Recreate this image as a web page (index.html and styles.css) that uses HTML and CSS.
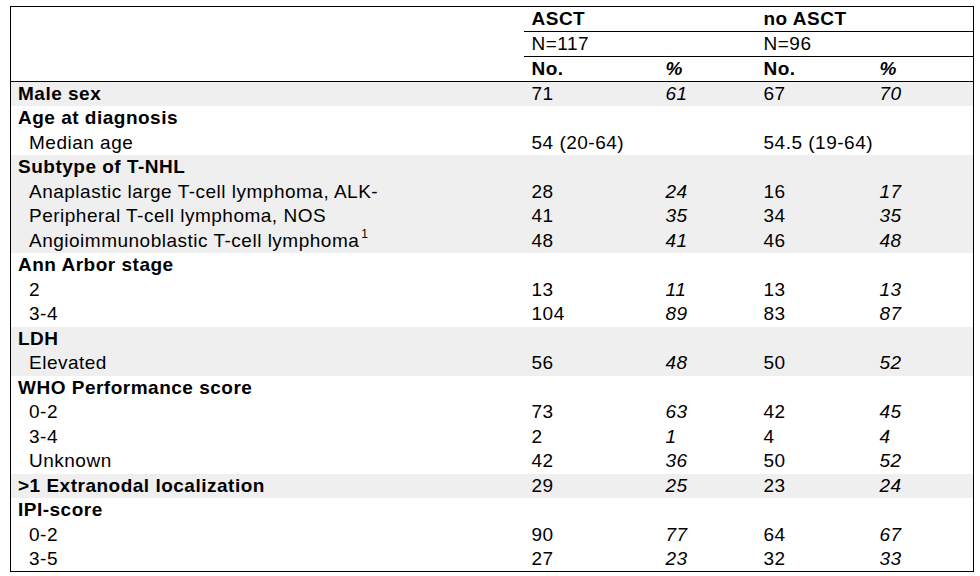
FILE: index.html
```html
<!DOCTYPE html>
<html>
<head>
<meta charset="utf-8">
<link rel="stylesheet" href="styles.css">
</head>
<body>
<table class="tbl">
  <colgroup>
    <col class="c-label">
    <col class="c-no">
    <col class="c-pct">
    <col class="c-no2">
    <col class="c-pct2">
  </colgroup>
  <thead>
    <tr class="h1">
      <th rowspan="3" class="blank"></th>
      <th colspan="2" class="grp">ASCT</th>
      <th colspan="2" class="grp">no ASCT</th>
    </tr>
    <tr class="h2">
      <td colspan="2" class="grp">N=117</td>
      <td colspan="2" class="grp">N=96</td>
    </tr>
    <tr class="h3">
      <th>No.</th>
      <th class="pct">%</th>
      <th>No.</th>
      <th class="pct">%</th>
    </tr>
  </thead>
  <tbody>
    <tr class="shade"><th class="lab">Male sex</th><td>71</td><td class="pct">61</td><td>67</td><td class="pct">70</td></tr>

    <tr><th class="lab">Age at diagnosis</th><td></td><td></td><td></td><td></td></tr>
    <tr><td class="sub">Median age</td><td colspan="2">54 (20-64)</td><td colspan="2">54.5 (19-64)</td></tr>

    <tr class="shade"><th class="lab">Subtype of T-NHL</th><td></td><td></td><td></td><td></td></tr>
    <tr class="shade"><td class="sub">Anaplastic large T-cell lymphoma, ALK-</td><td>28</td><td class="pct">24</td><td>16</td><td class="pct">17</td></tr>
    <tr class="shade"><td class="sub">Peripheral T-cell lymphoma, NOS</td><td>41</td><td class="pct">35</td><td>34</td><td class="pct">35</td></tr>
    <tr class="shade"><td class="sub">Angioimmunoblastic T-cell lymphoma<sup class="fn">1</sup></td><td>48</td><td class="pct">41</td><td>46</td><td class="pct">48</td></tr>

    <tr><th class="lab">Ann Arbor stage</th><td></td><td></td><td></td><td></td></tr>
    <tr><td class="sub">2</td><td>13</td><td class="pct">11</td><td>13</td><td class="pct">13</td></tr>
    <tr><td class="sub">3-4</td><td>104</td><td class="pct">89</td><td>83</td><td class="pct">87</td></tr>

    <tr class="shade"><th class="lab">LDH</th><td></td><td></td><td></td><td></td></tr>
    <tr class="shade"><td class="sub">Elevated</td><td>56</td><td class="pct">48</td><td>50</td><td class="pct">52</td></tr>

    <tr><th class="lab">WHO Performance score</th><td></td><td></td><td></td><td></td></tr>
    <tr><td class="sub">0-2</td><td>73</td><td class="pct">63</td><td>42</td><td class="pct">45</td></tr>
    <tr><td class="sub">3-4</td><td>2</td><td class="pct">1</td><td>4</td><td class="pct">4</td></tr>
    <tr><td class="sub">Unknown</td><td>42</td><td class="pct">36</td><td>50</td><td class="pct">52</td></tr>

    <tr class="shade"><th class="lab">&gt;1 Extranodal localization</th><td>29</td><td class="pct">25</td><td>23</td><td class="pct">24</td></tr>

    <tr><th class="lab">IPI-score</th><td></td><td></td><td></td><td></td></tr>
    <tr><td class="sub">0-2</td><td>90</td><td class="pct">77</td><td>64</td><td class="pct">67</td></tr>
    <tr><td class="sub">3-5</td><td>27</td><td class="pct">23</td><td>32</td><td class="pct">33</td></tr>
  </tbody>
</table>
</body>
</html>
```

FILE: styles.css
```css
html, body {
  margin: 0;
  padding: 0;
  background: #ffffff;
}

body {
  padding: 6px 0 0 10px;
  font-family: "Liberation Sans", Arial, sans-serif;
  color: #000000;
}

.tbl {
  width: 963px;
  table-layout: fixed;
  border-collapse: collapse;
  border: 1px solid #000000;
  font-size: 19px;
  letter-spacing: 0.5px;
}

.c-label { width: 513px; }
.c-no { width: 134px; }
.c-pct { width: 98px; }
.c-no2 { width: 116px; }
.c-pct2 { width: 102px; }

.tbl th,
.tbl td {
  padding: 1px 0 0 8px;
  line-height: 21.5px;
  height: 24.5px;
  box-sizing: border-box;
  text-align: left;
  vertical-align: top;
  white-space: nowrap;
  font-weight: normal;
}

.tbl thead th,
.tbl thead td {
  padding-top: 1px;
  padding-bottom: 0;
  line-height: 22px;
  height: 25px;
}

.tbl thead th {
  font-weight: bold;
}

.tbl .h1 .grp,
.tbl .h2 .grp {
  border-bottom: 1px solid #000000;
}

.tbl .h3 th {
  border-bottom: 1px solid #000000;
}

.tbl .blank {
  border-bottom: 1px solid #000000;
}

.tbl .lab {
  font-weight: bold;
  padding-left: 7px;
}

.tbl .sub {
  padding-left: 18px;
}

.tbl .pct {
  font-style: italic;
}

.shade th,
.shade td {
  background: #efefef;
}

.fn {
  font-size: 12px;
  letter-spacing: 0;
  vertical-align: 0;
  position: relative;
  top: -9px;
  margin-left: 2px;
  line-height: 0;
}
```
